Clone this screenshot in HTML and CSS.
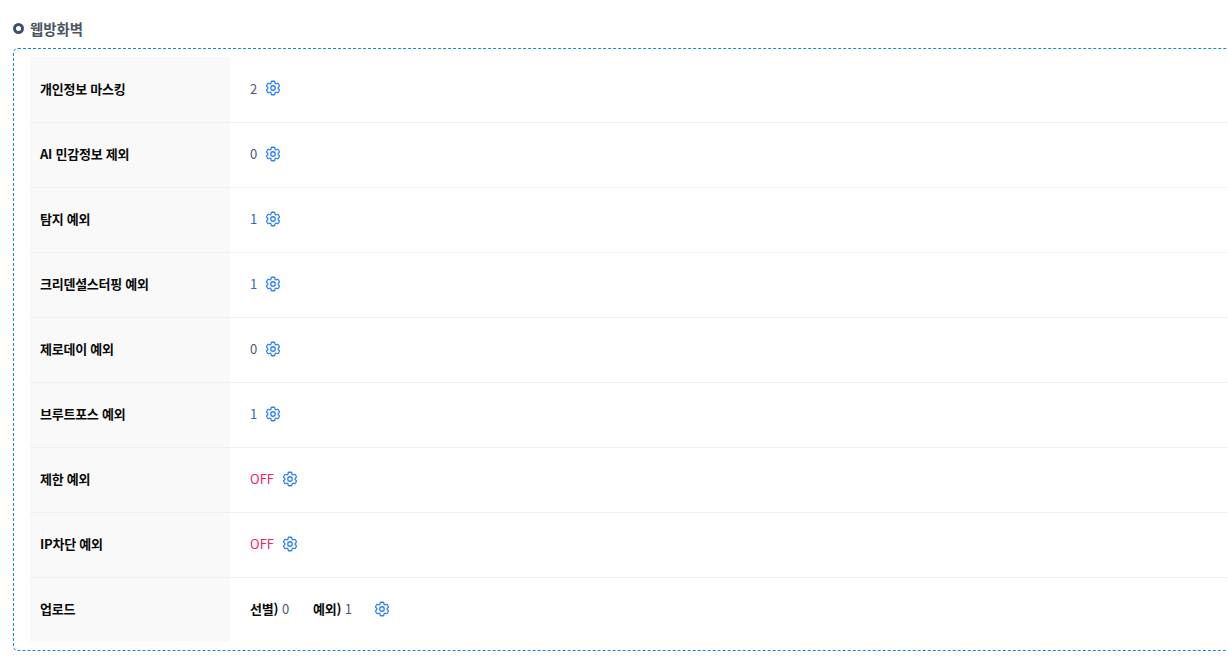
FILE: index.html
```html
<!DOCTYPE html>
<html lang="ko">
<head>
<meta charset="utf-8">
<title>웹방화벽</title>
<link rel="stylesheet" href="styles.css">
</head>
<body>
<svg class="defs" width="0" height="0" aria-hidden="true">
  <symbol id="gear" viewBox="0 0 24 24">
    <path fill="none" stroke="currentColor" stroke-width="1.7" stroke-linecap="round" stroke-linejoin="round" d="M9.594 3.94c.09-.542.56-.94 1.11-.94h2.593c.55 0 1.02.398 1.11.94l.213 1.281c.063.374.313.686.645.87.074.04.147.083.22.127.324.196.72.257 1.075.124l1.217-.456a1.125 1.125 0 011.37.49l1.296 2.247a1.125 1.125 0 01-.26 1.431l-1.003.827c-.293.24-.438.613-.431.992a6.759 6.759 0 010 .255c-.007.378.138.75.43.99l1.005.828c.424.35.534.954.26 1.43l-1.298 2.247a1.125 1.125 0 01-1.369.491l-1.217-.456c-.355-.133-.75-.072-1.076.124a6.57 6.57 0 01-.22.128c-.331.183-.581.495-.644.869l-.213 1.28c-.09.543-.56.941-1.11.941h-2.594c-.55 0-1.02-.398-1.11-.94l-.213-1.281c-.062-.374-.312-.686-.644-.87a6.52 6.52 0 01-.22-.127c-.325-.196-.72-.257-1.076-.124l-1.217.456a1.125 1.125 0 01-1.369-.49l-1.297-2.247a1.125 1.125 0 01.26-1.431l1.004-.827c.292-.24.437-.613.43-.992a6.932 6.932 0 010-.255c.007-.378-.138-.75-.43-.99l-1.004-.828a1.125 1.125 0 01-.26-1.43l1.297-2.247a1.125 1.125 0 011.37-.491l1.216.456c.356.133.751.072 1.076-.124.072-.044.146-.087.22-.128.332-.183.582-.495.644-.869l.214-1.281z"/>
    <path fill="none" stroke="currentColor" stroke-width="1.7" d="M15 12a3 3 0 11-6 0 3 3 0 016 0z"/>
  </symbol>
</svg>
<main class="page">
  <h2 class="title"><span class="bullet"></span>웹방화벽</h2>
  <section class="frame">
    <div class="row"><div class="label">개인정보 마스킹</div><div class="value"><span class="num">2</span><svg class="gear"><use href="#gear"/></svg></div></div>
    <div class="row"><div class="label">AI 민감정보 제외</div><div class="value"><span class="num">0</span><svg class="gear"><use href="#gear"/></svg></div></div>
    <div class="row"><div class="label">탐지 예외</div><div class="value"><span class="num link">1</span><svg class="gear"><use href="#gear"/></svg></div></div>
    <div class="row"><div class="label">크리덴셜스터핑 예외</div><div class="value"><span class="num link">1</span><svg class="gear"><use href="#gear"/></svg></div></div>
    <div class="row"><div class="label">제로데이 예외</div><div class="value"><span class="num">0</span><svg class="gear"><use href="#gear"/></svg></div></div>
    <div class="row"><div class="label">브루트포스 예외</div><div class="value"><span class="num link">1</span><svg class="gear"><use href="#gear"/></svg></div></div>
    <div class="row"><div class="label">제한 예외</div><div class="value"><span class="off">OFF</span><svg class="gear"><use href="#gear"/></svg></div></div>
    <div class="row"><div class="label">IP차단 예외</div><div class="value"><span class="off">OFF</span><svg class="gear"><use href="#gear"/></svg></div></div>
    <div class="row"><div class="label">업로드</div><div class="value"><span class="pair"><b>선별)</b> <span class="num">0</span></span><span class="pair last"><b>예외)</b> <span class="num">1</span></span><svg class="gear"><use href="#gear"/></svg></div></div>
  </section>
</main>
</body>
</html>
```
FILE: styles.css
```css
* { box-sizing: border-box; }
html, body { margin: 0; height: 100%; overflow: hidden; background: #fff; }
body { font-family: "Noto Sans CJK KR", "Noto Sans", sans-serif; font-size: 13px; color: #000; }
.defs { position: absolute; }
.page { padding: 18px 0 0 13px; width: 1228px; overflow: hidden; }
.title { display: flex; align-items: center; margin: 0; height: 21px; font-size: 14.4px; font-weight: 700; line-height: 21px; color: #4b5563; }
.bullet { width: 11px; height: 11px; margin-right: 6px; border: 3.5px solid #3f4f6b; border-radius: 50%; }
.frame { margin-top: 9px; width: 1300px; height: 603px; padding: 8px 16px; border: 1px dashed #0f85ff; border-radius: 5px; }
.row { display: flex; height: 65px; border-bottom: 1px solid #f0f0f0; }
.row:first-child { height: 66px; }
.row:last-child { border-bottom: 0; height: 64px; }
.label { display: flex; align-items: center; width: 200px; padding: 0 0 3px 10px; background: #f9f9f9; font-weight: 700; color: #0a0a0a; letter-spacing: -0.25px; }
.value { display: flex; align-items: center; padding: 0 0 3px 20px; color: #4a5a75; }
.num { color: #4a5a75; }
.num.link { color: #3469b5; }
.off { color: #f3235f; }
.pair { margin-right: 24px; letter-spacing: -0.15px; }
.pair.last { margin-right: 14.5px; }
.pair b { color: #0a0a0a; font-weight: 700; }
.gear { width: 18px; height: 18px; margin-left: 6.5px; color: #2a7fff; }
```
